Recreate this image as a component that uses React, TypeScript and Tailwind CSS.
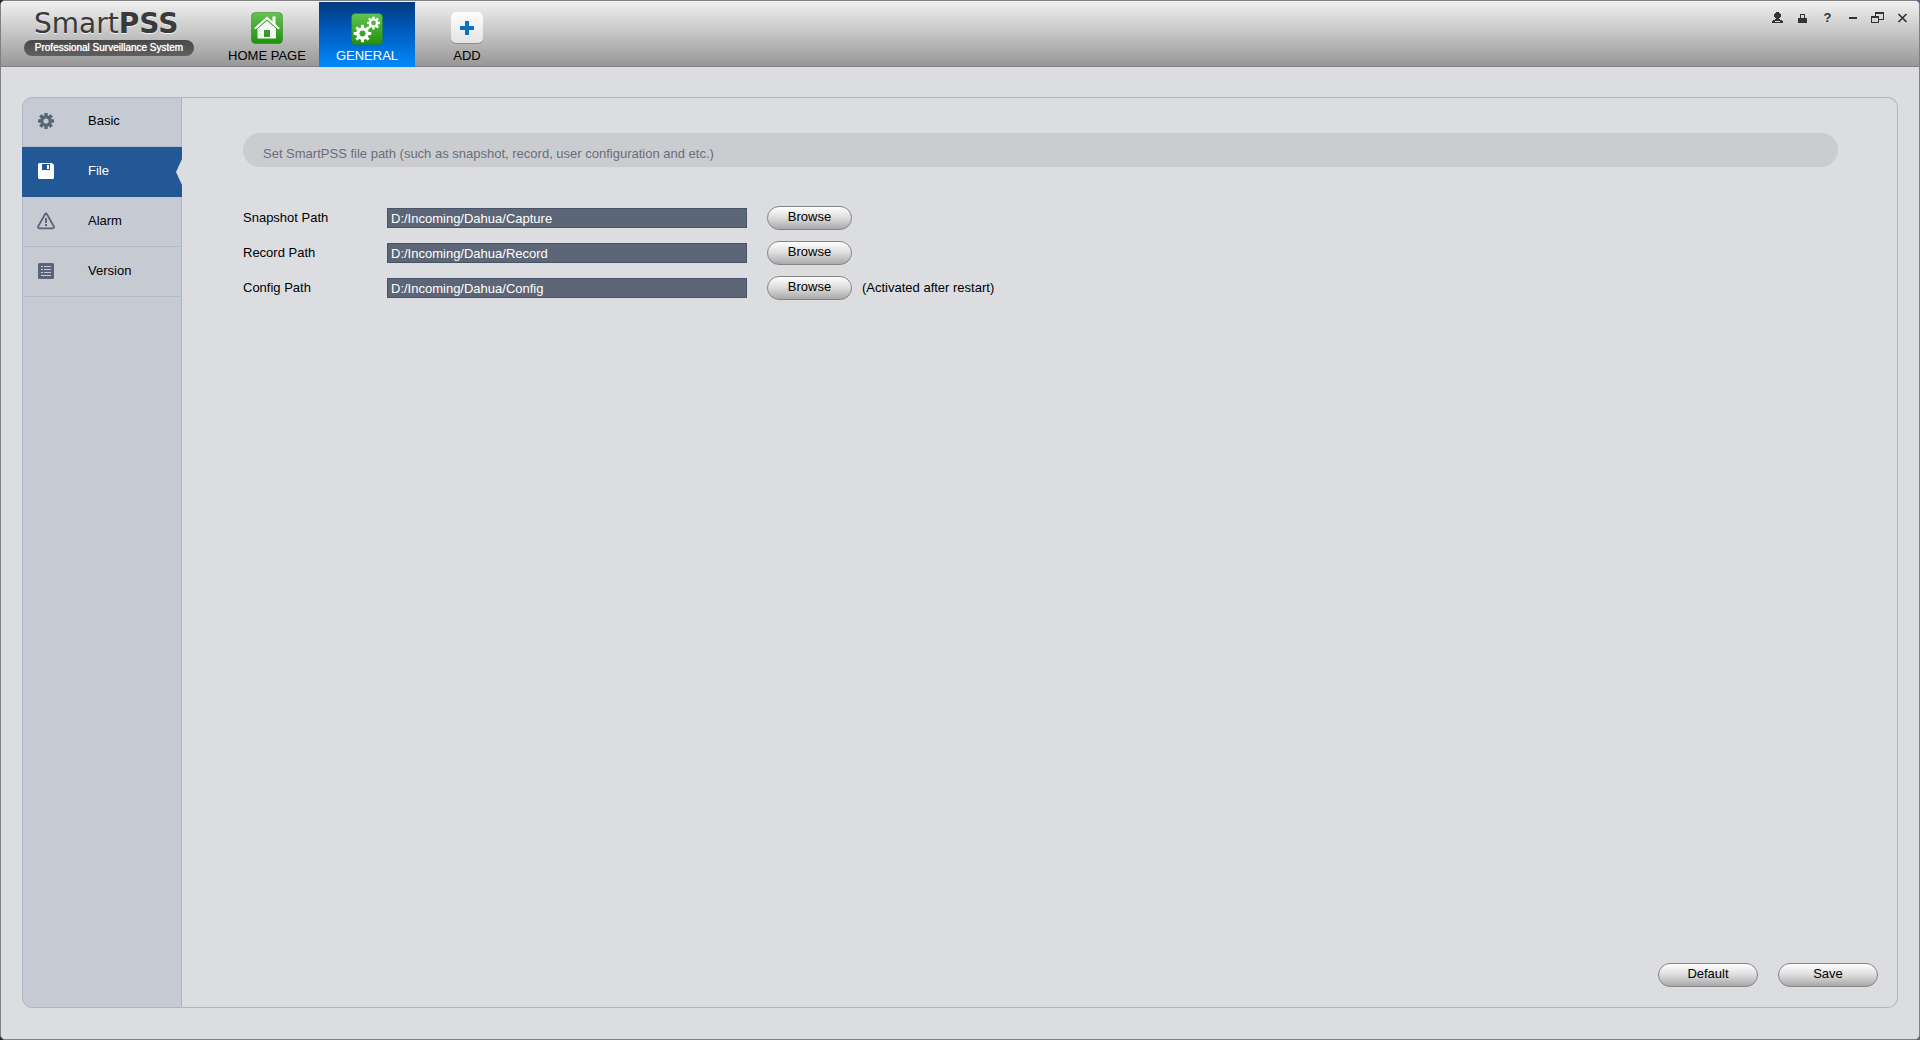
import { FC, ReactNode, useState } from "react";
import clsx from "clsx";

const App: FC = () => {
  const [section, setSection] = useState("File");

  return (
    <div className="min-h-screen bg-linear-to-r from-[#23262b] to-[#3c6a9f] font-['Liberation_Sans',Arial,sans-serif] text-[13px] leading-4 text-black">
      <div className="flex min-h-screen flex-col overflow-hidden rounded-[5px] border border-[#808080] bg-[#dbdde1]">
        <Header />
        <main className="flex grow px-[21px] pt-[30px] pb-[31px]">
          <Sidebar section={section} onSelect={setSection} />
          <FileSettings />
        </main>
      </div>
    </div>
  );
};

const Header: FC = () => (
  <header className="flex h-[66px] items-start border-t border-b border-t-[#f4f4f4] border-b-[#808083] bg-linear-to-b from-[#ebebeb] from-5% via-[#c4c4c4] via-50% to-[#979797]">
    <div className="w-[218px] pt-1.5 pl-[23px]">
      <h1 className="pl-2.5 font-['DejaVu_Sans',Verdana,sans-serif] text-[28px] leading-8 text-[#3a3a3a] [text-shadow:0_1px_0_#f0f0f0]">
        Smart<b>PSS</b>
      </h1>
      <p className="h-4 w-[170px] rounded-full bg-linear-to-b from-[#484848] to-[#606060] text-center text-[10px] leading-4 whitespace-nowrap text-white [text-shadow:0_0_1px_#fff]">
        Professional Surveillance System
      </p>
    </div>

    <nav className="flex gap-1">
      <Tab label="HOME PAGE" icon={<HomeTile />} />
      <Tab label="GENERAL" icon={<GearsTile />} active />
      <Tab label="ADD" icon={<AddTile />} />
    </nav>

    <div className="mt-1 mr-1 ml-auto flex">
      <WindowButton label="User">
        <path d="M5 0h3v1h1v1h1v3H9v1H8v1h1v1h2v1h1v2H1V9h1V8h2V7h1V6H4V5H3V2h1V1h1zM4 9v1h5V9z" fillRule="evenodd" />
      </WindowButton>
      <WindowButton label="Lock">
        <path d="M4 2h5v4h2v5H2V6h2zm1 1v3h3V3z" fillRule="evenodd" />
      </WindowButton>
      <button
        type="button"
        aria-label="Help"
        className="h-6 w-[25px] text-[13px] font-bold text-[#333]"
      >
        ?
      </button>
      <WindowButton label="Minimize">
        <path d="M3 5h8v2H3z" />
      </WindowButton>
      <WindowButton label="Restore">
        <path
          d="M4 0h9v8H8v3H0V4h4zM5 2v2h3v3h4V2zM1 6v4h6V6z"
          fillRule="evenodd"
        />
      </WindowButton>
      <WindowButton label="Close">
        <path
          d="M2.500 2l8 8M10.500 2l-8 8"
          fill="none"
          stroke="currentColor"
          strokeWidth="1.700"
        />
      </WindowButton>
    </div>
  </header>
);

type TabProps = {
  label: string;
  icon: ReactNode;
  active?: boolean;
};

const Tab: FC<TabProps> = ({ label, icon, active }) => (
  <button
    type="button"
    className={clsx(
      "flex h-[65px] w-24 flex-col items-center",
      active
        ? "bg-linear-to-b from-[#013a80] via-[#0060c4] to-[#0389fc] pt-[11px] text-white"
        : "gap-px pt-2.5"
    )}
  >
    {icon}
    <span className="pt-[3px]">{label}</span>
  </button>
);

type WindowButtonProps = {
  label: string;
  children: ReactNode;
};

const WindowButton: FC<WindowButtonProps> = ({ label, children }) => (
  <button
    type="button"
    aria-label={label}
    className="flex h-6 w-[25px] items-center justify-center text-[#333]"
  >
    <svg width="13" height="12" viewBox="0 0 13 12" fill="currentColor">
      {children}
    </svg>
  </button>
);

const GreenTile: FC<{ id: string; children: ReactNode }> = ({ id, children }) => (
  <svg width="32" height="32" viewBox="0 0 32 32">
    <defs>
      <linearGradient id={id} x1="0" y1="0" x2="0" y2="1">
        <stop offset="0" stopColor="#62c450" />
        <stop offset="1" stopColor="#1f920c" />
      </linearGradient>
    </defs>
    <rect x="0.500" y="0.500" width="31" height="31" rx="4" fill={`url(#${id})`} stroke="#2b7d1c" strokeOpacity="0.5" />
    {children}
  </svg>
);

const HomeTile: FC = () => (
  <GreenTile id="home-green">
    <path d="M21.500 4.500h3v9l-3-3z" fill="#fff" />
    <path d="M6.500 16L16 8l9 8v10.500H6.500z" fill="#f3f7f1" />
    <path d="M4 18.200L16 7.800l12 10.400" fill="none" stroke="#3a9c2a" strokeWidth="1.400" />
    <path d="M4.500 16.200L16 6l11.500 10.200" fill="none" stroke="#fff" strokeWidth="2.200" strokeLinecap="round" />
    <path d="M13 18h6v7h-6z" fill="#3c962c" />
  </GreenTile>
);

type GearProps = {
  cx: number;
  cy: number;
  r: number;
  hole: number;
  tooth: number;
  fill: string;
  holeFill: string;
};

const Gear: FC<GearProps> = ({ cx, cy, r, hole, tooth, fill, holeFill }) => (
  <g transform={`translate(${cx} ${cy})`} fill={fill}>
    {[0, 45, 90, 135].map((angle) => (
      <rect
        key={angle}
        x={-tooth / 2}
        y={-r}
        width={tooth}
        height={r * 2}
        rx="0.6"
        transform={`rotate(${angle})`}
      />
    ))}
    <circle r={r * 0.72} />
    <circle r={hole} fill={holeFill} />
  </g>
);

const GearsTile: FC = () => (
  <GreenTile id="gears-green">
    <Gear cx={11.5} cy={20.5} r={8.8} hole={3} tooth={3} fill="#fff" holeFill="#3ba22a" />
    <Gear cx={22.5} cy={10} r={6.6} hole={2.4} tooth={2.4} fill="#fff" holeFill="#55b744" />
  </GreenTile>
);

const AddTile: FC = () => (
  <svg width="32" height="32" viewBox="0 0 32 32">
    <defs>
      <linearGradient id="add-white" x1="0" y1="0" x2="0" y2="1">
        <stop offset="0" stopColor="#fdfdfd" />
        <stop offset="1" stopColor="#e4e4e4" />
      </linearGradient>
    </defs>
    <rect y="1" width="32" height="31" rx="5" fill="#8c8c8c" />
    <rect width="32" height="31" rx="5" fill="url(#add-white)" />
    <path d="M14 9h4v5h5v4h-5v5h-4v-5H9v-4h5z" fill="#0a72c4" />
  </svg>
);

type SidebarProps = {
  section: string;
  onSelect: (name: string) => void;
};

const sections: { name: string; icon: ReactNode }[] = [
  {
    name: "Basic",
    icon: (
      <Gear cx={9} cy={9} r={8} hole={2.6} tooth={3.4} fill="currentColor" holeFill="#c6cad3" />
    ),
  },
  {
    name: "File",
    icon: (
      <path
        d="M2.500 1H15l2 2v12.500a1.500 1.500 0 0 1-1.500 1.500h-13A1.500 1.500 0 0 1 1 15.500v-13A1.500 1.500 0 0 1 2.500 1zM5 2v6h8V2zM10 3h2v4h-2z"
        fillRule="evenodd"
      />
    ),
  },
  {
    name: "Alarm",
    icon: (
      <>
        <path
          d="M8 2.200Q9 .8 10 2.200L16.900 14.500Q17.400 16.200 15.600 16.300H2.400Q.6 16.200 1.100 14.500z"
          fill="none"
          stroke="currentColor"
          strokeWidth="1.800"
        />
        <path d="M8 6h2v5H8zM8 12h2v2H8z" />
      </>
    ),
  },
  {
    name: "Version",
    icon: (
      <path
        d="M2.500 1h13A1.500 1.500 0 0 1 17 2.500v13a1.500 1.500 0 0 1-1.500 1.500h-13A1.500 1.500 0 0 1 1 15.500v-13A1.500 1.500 0 0 1 2.500 1zM4 4v1h2V4zM7 4v1h7V4zM4 7v1h2V7zM7 7v1h7V7zM4 10v1h2v-1zM7 10v1h7v-1zM4 13v1h10v-1z"
        fillRule="evenodd"
      />
    ),
  },
];

const Sidebar: FC<SidebarProps> = ({ section, onSelect }) => (
  <nav className="w-40 shrink-0 rounded-l-[10px] border border-[#adb6c8] bg-[#c6cad3]">
    <ul>
      {sections.map(({ name, icon }) => {
        const active = name === section;
        return (
          <li key={name} className="-mx-px first:-mt-px">
            <button
              type="button"
              onClick={() => onSelect(name)}
              className={clsx(
                "relative flex h-[50px] w-full items-center border-b pb-px pl-[15px] text-left",
                active
                  ? "border-[#225895] bg-[#225895] text-white"
                  : "border-[#b3bac9]"
              )}
            >
              <svg
                width="18"
                height="18"
                viewBox="0 0 18 18"
                fill="currentColor"
                className={active ? "text-white" : "text-[#586478]"}
              >
                {icon}
              </svg>
              <span className="pl-[33px]">{name}</span>
              {active && (
                <svg
                  width="6"
                  height="26"
                  viewBox="0 0 6 26"
                  className="absolute top-3 right-0"
                >
                  <path d="M6 0v26L0 13z" fill="#dbdde1" />
                </svg>
              )}
            </button>
          </li>
        );
      })}
    </ul>
  </nav>
);

const paths = [
  { id: "snapshot", label: "Snapshot Path", value: "D:/Incoming/Dahua/Capture" },
  { id: "record", label: "Record Path", value: "D:/Incoming/Dahua/Record" },
  {
    id: "config",
    label: "Config Path",
    value: "D:/Incoming/Dahua/Config",
    note: "(Activated after restart)",
  },
];

const FileSettings: FC = () => (
  <section className="flex grow flex-col rounded-r-[10px] border border-l-0 border-[#adb6c8] pt-[35px] pr-[19px] pb-5 pl-[61px]">
    <p className="mr-10 h-[34px] rounded-full bg-[#cbccd0] px-5 pt-[13px] text-[#686e7c]">
      Set SmartPSS file path (such as snapshot, record, user configuration and etc.)
    </p>

    <form className="mt-[39px] flex flex-col gap-[11px]">
      {paths.map(({ id, label, value, note }) => (
        <div key={id} className="flex h-6 items-center">
          <label htmlFor={id} className="w-36">
            {label}
          </label>
          <input
            id={id}
            type="text"
            defaultValue={value}
            className="mr-5 h-5 w-[360px] border border-[#485268] bg-[#5d6677] px-[3px] text-white"
          />
          <PillButton className="w-[85px]">Browse</PillButton>
          {note && <span className="pl-2.5">{note}</span>}
        </div>
      ))}
    </form>

    <div className="mt-auto flex justify-end gap-5">
      <PillButton className="w-[100px]">Default</PillButton>
      <PillButton className="w-[100px]">Save</PillButton>
    </div>
  </section>
);

type PillButtonProps = {
  className: string;
  children: ReactNode;
};

const PillButton: FC<PillButtonProps> = ({ className, children }) => (
  <button
    type="button"
    className={clsx(
      "h-6 rounded-full border border-[#858585] bg-linear-to-b from-white via-[#dcdcdc] to-[#a9a9a9] pb-0.5",
      className
    )}
  >
    {children}
  </button>
);

export default App;
